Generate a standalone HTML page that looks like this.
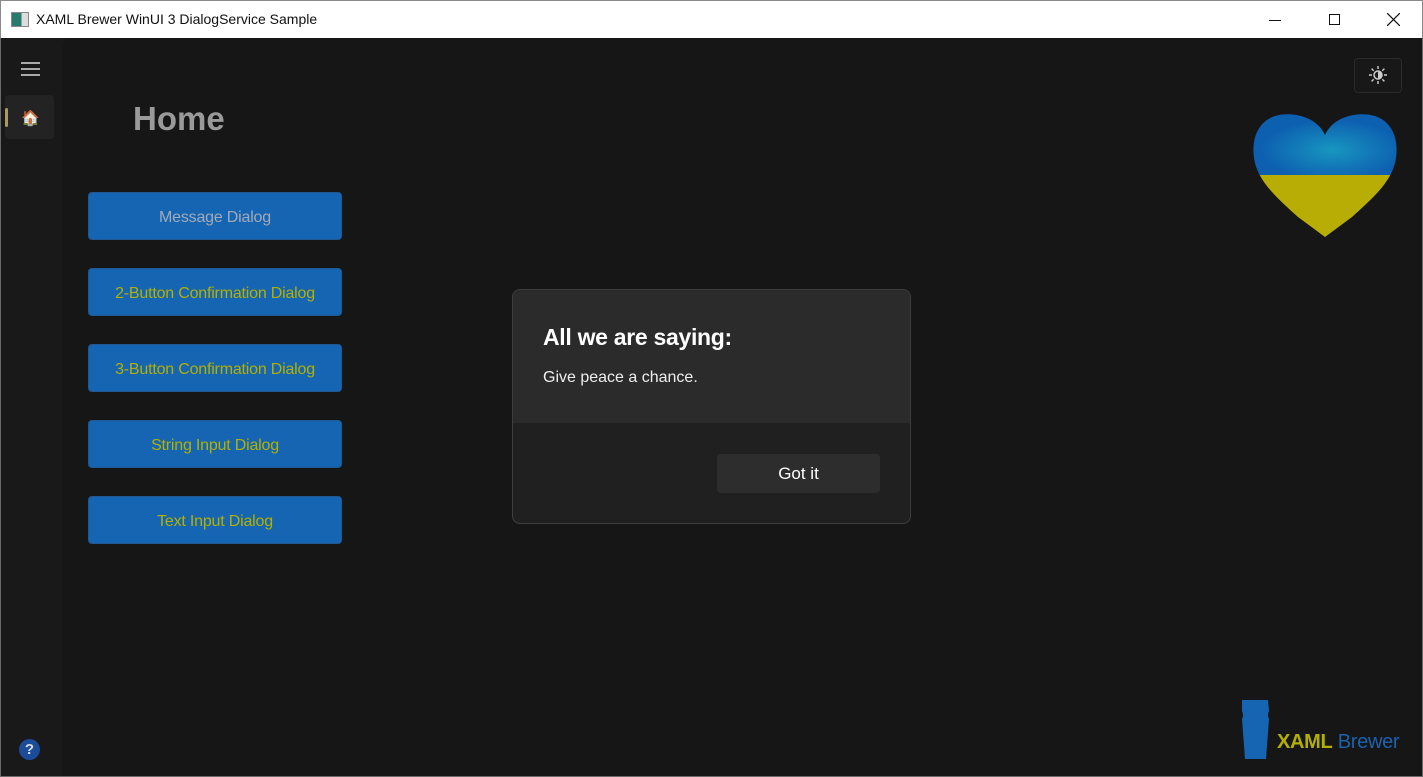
<!DOCTYPE html>
<html><head><style>
*{margin:0;padding:0;box-sizing:border-box}
body{width:1423px;height:777px;overflow:hidden;background:#141414;font-family:"Segoe UI","Liberation Sans",sans-serif;position:relative}
.tb{position:absolute;left:0;top:0;width:1423px;height:38px;background:#fff;border:1px solid #8a8a8a;border-bottom:none}
.tb .t{position:absolute;left:35px;top:10px;font-size:14px;color:#111}
.win{position:absolute;left:0;top:38px;width:1423px;height:739px;background:#191919;border-left:1px solid #6a6a6a;border-right:1px solid #6a6a6a;border-bottom:1px solid #6a6a6a}
.content{position:absolute;left:62px;top:38px;width:1360px;height:738px;background:#161616;border-top-left-radius:8px}
.btn{position:absolute;left:88px;width:254px;height:48px;background:#1565b2;border-radius:4px;color:#b4b000;font-size:16px;text-align:center;line-height:50px;border:1px solid #1d5a95;letter-spacing:-0.2px}
.dlg{position:absolute;left:512px;top:289px;width:399px;height:235px;border:1px solid #3e3e3e;border-radius:8px;overflow:hidden;background:#202020}
.dtop{height:133px;background:#2b2b2b;padding:34px 30px}
</style></head><body>
<div class="tb">
<div style="position:absolute;left:10px;top:11px;width:18px;height:15px;border:1px solid #888;background:linear-gradient(90deg,#2a7a6e 60%,#ddd 60%)"></div>
<div class="t">XAML Brewer WinUI 3 DialogService Sample</div>
<div style="position:absolute;left:1268px;top:19px;width:12px;height:1px;background:#111"></div>
<div style="position:absolute;left:1328px;top:13px;width:11px;height:11px;border:1px solid #111"></div>
<svg style="position:absolute;left:1386px;top:12px" width="13" height="13"><path d="M0 0L13 13M13 0L0 13" stroke="#111" stroke-width="1.2"/></svg>
</div>
<div class="win"></div>
<div class="content"></div>
<div style="position:absolute;left:21px;top:62px;width:19px;height:1.5px;background:#aaa;box-shadow:0 6px 0 #aaa,0 12px 0 #aaa"></div>
<div style="position:absolute;left:5px;top:95px;width:49px;height:44px;background:#232323;border-radius:4px"></div>
<div style="position:absolute;left:5px;top:108px;width:3px;height:19px;background:#a89a60;border-radius:2px"></div>
<div style="position:absolute;left:21px;top:109px;font-size:15px">🏠</div>
<div style="position:absolute;left:133px;top:100px;font-size:33px;font-weight:600;color:#9a9a9a">Home</div>
<div class="btn" style="top:192px;color:#a2aab8">Message Dialog</div>
<div class="btn" style="top:268px">2-Button Confirmation Dialog</div>
<div class="btn" style="top:344px">3-Button Confirmation Dialog</div>
<div class="btn" style="top:420px">String Input Dialog</div>
<div class="btn" style="top:496px">Text Input Dialog</div>
<div style="position:absolute;left:1354px;top:58px;width:48px;height:35px;border:1px solid #2a2a2a;border-radius:4px;background:#181818"></div>
<svg style="position:absolute;left:1368px;top:65px" width="20" height="20" viewBox="0 0 20 20"><circle cx="10" cy="10" r="4" fill="none" stroke="#ccc" stroke-width="1.5"/><path d="M10 6A4 4 0 0 1 10 14Z" fill="#ccc"/><path d="M10 1V4M10 16V19M1 10H4M16 10H19M3.6 3.6L5.7 5.7M14.3 14.3L16.4 16.4M3.6 16.4L5.7 14.3M14.3 5.7L16.4 3.6" stroke="#ccc" stroke-width="1.4"/></svg>
<svg style="position:absolute;left:1253px;top:113px" width="144" height="124" viewBox="0 0 144 124">
<defs><clipPath id="h"><path d="M72 22C64 4 40-2 22 3C4 9-3 28 2 50C7 70 25 86 45 104L72 124L99 104C119 86 137 70 142 50C147 28 140 9 122 3C104-2 80 4 72 22Z"/></clipPath>
<radialGradient id="g" cx="0.55" cy="0.6" r="0.5"><stop offset="0" stop-color="#1896c0"/><stop offset="1" stop-color="#0d5fb0"/></radialGradient></defs>
<g clip-path="url(#h)"><rect width="144" height="62" fill="url(#g)"/><rect y="62" width="144" height="70" fill="#b7ad05"/></g></svg>
<div class="dlg"><div class="dtop">
<div style="font-size:23px;font-weight:600;color:#fff;letter-spacing:-0.3px">All we are saying:</div>
<div style="font-size:16px;color:#eee;margin-top:18px">Give peace a chance.</div></div>
<div style="position:absolute;left:204px;top:164px;width:163px;height:39px;background:#2d2d2d;border-radius:4px;color:#fff;font-size:17px;text-align:center;line-height:39px">Got it</div>
</div>
<div style="position:absolute;left:19px;top:739px;width:21px;height:21px;border-radius:50%;background:#1b4c9a;color:#ddd;font-size:15px;font-weight:bold;text-align:center;line-height:21px">?</div>
<svg style="position:absolute;left:1239px;top:699px" width="32" height="62"><path d="M3 1H29L30 12Q28 16 30 20L27 60H6L3 20Q5 16 3 12Z" fill="#1565b2"/></svg>
<div style="position:absolute;left:1277px;top:731px;font-size:20px;letter-spacing:-0.3px"><b style="color:#b4b000;font-weight:600">XAML</b> <span style="color:#1a62ad">Brewer</span></div>
</body></html>
